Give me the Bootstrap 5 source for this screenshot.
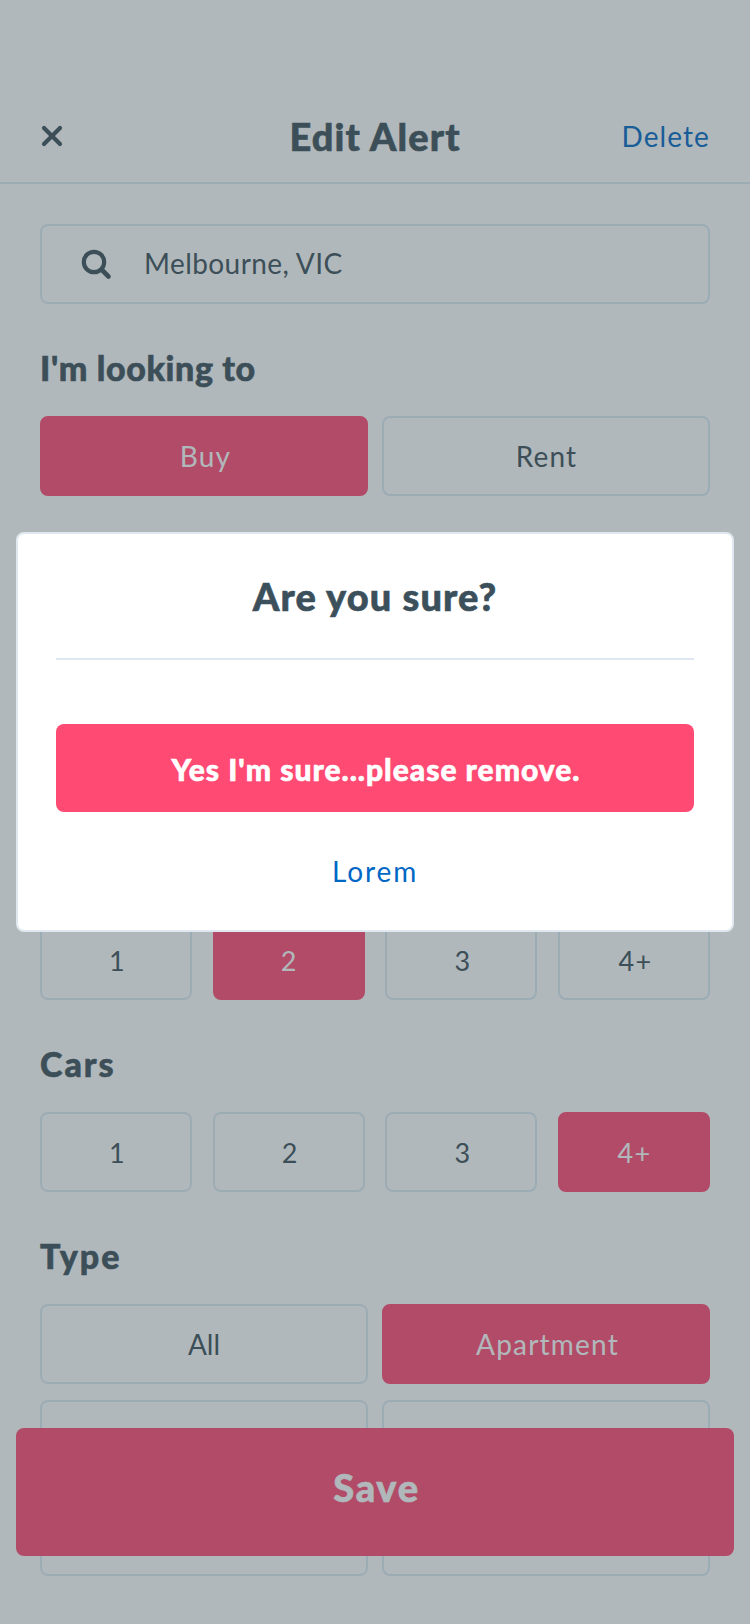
<!DOCTYPE html>
<html lang="en">
<head>
<meta charset="utf-8">
<meta name="viewport" content="width=device-width, initial-scale=1">
<title>Edit Alert</title>
<link href="https://cdn.jsdelivr.net/npm/bootstrap@5.3.0/dist/css/bootstrap.min.css" rel="stylesheet">
<style>
  :root { --ink: #3c505b; --line: #dfe8f0; --field-line: #dcebf4; --pink: #ff4a73; --link: #0067c5; }
  body { font-family: Lato, "Liberation Sans", sans-serif; font-size: 28px; line-height: 1.2; color: var(--ink); background: #fff; }
  .screen { height: 1624px; overflow: hidden; }
  .topbar { height: 184px; padding: 91px 40px 0; border-bottom: 2px solid var(--field-line); }
  .topbar > * { flex: 1 1 0; }
  .close-icon { margin-bottom: 1px; }
  .page-title, .dialog-title { font-size: 38px; font-weight: 900; line-height: 1.2; letter-spacing: 1.1px; white-space: nowrap; }
  .page-title, .dialog-title, .section-title, .btn-pink { -webkit-text-stroke: .6px currentColor; }
  .text-action { color: var(--link); text-decoration: none; letter-spacing: 1.1px; }
  .content { padding: 40px 40px 0; }
  .search-box { height: 80px; border: 2px solid var(--field-line); border-radius: 8px; padding-left: 38px; gap: 30px; letter-spacing: .42px; }
  .section-title { height: 112px; padding-top: 17px; font-size: 34px; font-weight: 900; line-height: 1.2; letter-spacing: .6px; }
  .section-title.wide { letter-spacing: 2px; }
  .pair { display: grid; grid-template-columns: 1fr 1fr; gap: 16px 14px; }
  .quad { display: grid; grid-template-columns: repeat(4, 152px); justify-content: space-between; }
  .option { height: 80px; padding: 1px 0 0 1px; border: 2px solid var(--field-line); border-radius: 8px; font-size: 28px; line-height: 1.2; letter-spacing: 1.2px; color: var(--ink); background: transparent; }
  .option.active { background: var(--pink); border-color: var(--pink); color: #fff; padding-left: 3px; }
  .quad .option { font-size: 27px; padding: 2px 0 0 3px; }
  .quad .option.active { padding-left: 1px; }
  .option.tight { letter-spacing: 0; padding-left: 0; }
  .later { margin-top: 424px; }
  .save-bar { left: 16px; right: 16px; top: 1428px; height: 128px; }
  .btn-pink { background: var(--pink); color: #fff; border: 0; border-radius: 8px; font-weight: 900; line-height: 1.2; }
  .save-bar .btn-pink { font-size: 38px; padding: 0 0 8px 3px; letter-spacing: 1.7px; }
  .shade { background: rgba(59, 77, 85, .4); }
  .dialog-box { left: 16px; right: 16px; top: 532px; height: 400px; background: #fff; border: 2px solid var(--line); border-radius: 8px; padding: 0 38px; }
  .dialog-head { height: 126px; padding-top: 2px; border-bottom: 2px solid var(--line); }
  .confirm { height: 88px; margin-top: 64px; font-size: 30px; padding: 2px 0 0 2px; letter-spacing: 1px; }
  .dismiss { padding-top: 2px; }
  .dismiss .text-action { letter-spacing: 1.9px; }
</style>
</head>
<body>
<div class="screen position-relative">
  <header class="topbar d-flex align-items-center">
    <div class="close-icon d-flex"><svg width="24" height="24" viewBox="0 0 24 24" fill="none" stroke="currentColor" stroke-width="4.2" stroke-linecap="round"><path d="M4 4l16 16M20 4L4 20"/></svg></div>
    <h1 class="page-title text-center m-0">Edit Alert</h1>
    <div class="text-end"><a class="text-action" href="#">Delete</a></div>
  </header>
  <main class="content">
    <div class="search-box d-flex align-items-center">
      <svg width="34" height="34" viewBox="0 0 34 34" fill="none" stroke="currentColor"><circle cx="14" cy="15" r="10.2" stroke-width="4.2"/><path d="M21.5 22.5l7 7" stroke-width="4.6" stroke-linecap="round"/></svg>
      <span>Melbourne, VIC</span>
    </div>
    <h2 class="section-title d-flex align-items-center m-0">I'm looking to</h2>
    <div class="pair">
      <button class="btn option active">Buy</button>
      <button class="btn option">Rent</button>
    </div>
    <div class="quad later">
      <button class="btn option">1</button>
      <button class="btn option active">2</button>
      <button class="btn option">3</button>
      <button class="btn option">4+</button>
    </div>
    <h2 class="section-title wide d-flex align-items-center m-0">Cars</h2>
    <div class="quad">
      <button class="btn option">1</button>
      <button class="btn option">2</button>
      <button class="btn option">3</button>
      <button class="btn option active">4+</button>
    </div>
    <h2 class="section-title wide d-flex align-items-center m-0">Type</h2>
    <div class="pair">
      <button class="btn option tight">All</button>
      <button class="btn option active">Apartment</button>
      <div class="option"></div>
      <div class="option"></div>
      <div class="option"></div>
      <div class="option"></div>
    </div>
  </main>
  <div class="save-bar position-absolute d-flex"><button class="btn btn-pink w-100">Save</button></div>
  <div class="shade position-absolute top-0 start-0 w-100 h-100"></div>
  <section class="dialog-box position-absolute d-flex flex-column" role="dialog">
    <div class="dialog-head d-flex align-items-center justify-content-center"><h2 class="dialog-title m-0">Are you sure?</h2></div>
    <button class="btn btn-pink confirm w-100">Yes I'm sure...please remove.</button>
    <div class="dismiss flex-grow-1 d-flex align-items-center justify-content-center"><a class="text-action" href="#">Lorem</a></div>
  </section>
</div>
<script src="https://cdn.jsdelivr.net/npm/bootstrap@5.3.0/dist/js/bootstrap.bundle.min.js"></script>
</body>
</html>
